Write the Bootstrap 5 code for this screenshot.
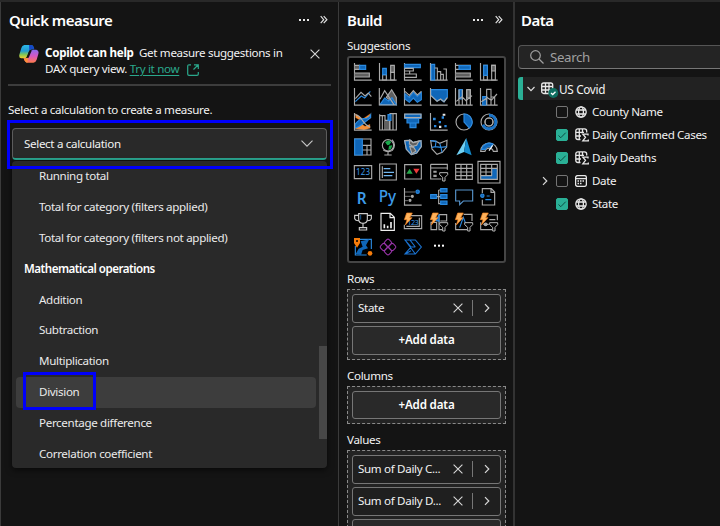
<!DOCTYPE html>
<html lang="en" data-bs-theme="dark">
<head>
<meta charset="utf-8">
<meta name="viewport" content="width=device-width, initial-scale=1">
<title>Quick measure</title>
<link href="https://cdn.jsdelivr.net/npm/bootstrap@5.3.0/dist/css/bootstrap.min.css" rel="stylesheet">
<style>
body{font-family:"Noto Sans","Open Sans",sans-serif;font-size:11.6px;line-height:16px;letter-spacing:-.33px;background:#141414;color:#f2f2f2;height:526px;overflow:hidden}
.app-shell{height:526px;border-top:2px solid #292929;overflow:hidden}
.pane{border-left:1px solid #3b3b3b;height:524px;flex:none;white-space:nowrap}
.pane-quick{width:338px}
.pane-build{width:175px}
.pane-data{width:207px;border-left-width:2px;border-color:#333}
.pane-title{font-size:15px;line-height:20px;font-weight:600;letter-spacing:-.5px;color:#fff}
.pane svg{flex:none;display:block}
b{font-weight:700;letter-spacing:-.27px;color:#fff}
.pane-head{height:36px;padding-top:8px}
.tip{margin:0 7px 0 7px;height:48px;border-bottom:2px solid #3d3d3d;padding:7px 11px 0 11px}
.tip-text{width:252px;margin-left:6px}
.teal-link{color:#2aa88c;text-decoration:underline;text-underline-offset:2px}
.prompt{margin:16px 7px 0}
.calc-select{margin:10px 11px 0 11px;height:32px;width:315px;background:#292929;border:1px solid #5c5c5c;border-bottom:2px solid #2aa690;border-radius:4px;padding:0 13px 0 11px}
.calc-menu{margin:1px 11px 0;width:315px;height:307px;background:#292929;border-radius:4px;padding:0 11px 0 4px;box-shadow:0 2px 6px #0009;position:relative}
.calc-item{height:30.9px;line-height:30.9px;padding-left:23px;border-radius:4px;color:#ebebeb}
.calc-head{padding-left:8px;font-weight:600;color:#fff;letter-spacing:-.5px}
.calc-item.current{background:#3d3d3d}
.scroll-thumb{position:absolute;right:0;top:185px;width:8px;height:93px;background:#474747}
.marker{position:absolute;border:3px solid #0000fb}
.marker-select{left:7px;top:120px;width:326px;height:49px}
.marker-item{left:23px;top:372px;width:73px;height:38px}
.visuals{background:#000;border:2px solid #454545;border-radius:3px;display:grid;grid-template-columns:repeat(6,25.2px);grid-auto-rows:25px;width:159px;height:207px;padding:1px 2px;margin-top:2px}
.visuals>svg{width:18px;height:18px;margin:4px 0 0 3px;overflow:visible;fill:none;stroke:#aaa;stroke-width:3.4}
.visuals .b{fill:#0f66b8;stroke:#2b8ae0}
.visuals .l{stroke:#2b8ae0}
.visuals .d{fill:#606060}
.visuals .f{fill:#0f66b8;stroke:none}
.visuals .o{fill:#f59038;stroke:#c05a10;stroke-width:1}
.visuals text{stroke:none;fill:#3d9be8;font-family:"Noto Sans",sans-serif;letter-spacing:0}
.well{width:159px;border:1px dashed #8a8a8a;background:#232323;padding:4px}
.pill,.add-pill{height:28.5px;border:1px solid #767676;border-radius:3px;background:#1f1f1f}
.pill{padding:0 10px 0 5px}
.pill .name{width:96px}
.add-pill{background:#292929;font-weight:600;color:#fff;text-align:center;line-height:26px;letter-spacing:-.15px}
.well>*+*{margin-top:3.500px}
.sep{width:1px;height:16px;background:#777;margin:0 11px 0 9px}
.well-label{height:16px;margin-top:8px;margin-bottom:2px}
.search-field{height:24px;margin:7px 0 0 3px;border:1px solid #555;border-right:0;border-bottom-color:#777;border-radius:4px 0 0 4px;background:#242424;color:#a0a0a0;font-size:13.3px;letter-spacing:-.35px;padding-left:11px;gap:6px}
.table-row{height:23px;margin:8px 0 0 3px;background:#222;border-left:5px solid #2bb096;border-radius:3px 0 0 3px;padding-left:4px;font-size:11.8px}
.field{height:23.2px;padding-left:27px;letter-spacing:-.35px}
.chk{width:12px;height:12px;border:1px solid #757575;border-radius:2px}
.chk.on{background:#2ab096;border-color:#2ab096}
.ico{fill:none;stroke:#e8e8e8;stroke-width:1.3}
.ico-s{margin:0 5px 0 7px}
.ico-m{margin:0 3px 0 7px}
</style>
<script src="https://cdn.jsdelivr.net/npm/bootstrap@5.3.0/dist/js/bootstrap.bundle.min.js"></script>
</head>
<body>
<svg width="0" height="0" class="position-absolute">
<symbol id="axes" viewBox="0 0 54 54" overflow="visible"><path d="M1.5 0V51.5H53" fill="none" stroke="#aaa" stroke-width="3.400"/></symbol>
<symbol id="bolt" viewBox="0 0 54 54" overflow="visible"><path d="M8 0H25L17 14H24L4 36L9 20H1Z" fill="#ffb35c" stroke="#f58220" stroke-width="2"/></symbol>
<symbol id="funnel" viewBox="0 0 54 54" overflow="visible"><path d="M29 29H53V35L45 43V54H38V43L29 35Z" fill="#000" stroke="#b5b5b5" stroke-width="3"/></symbol>
<symbol id="globe" viewBox="0 0 12 12"><circle cx="6" cy="6" r="5.2"/><ellipse cx="6" cy="6" rx="2.4" ry="5.2"/><path d="M1.2 4H10.8M1.2 8H10.8"/></symbol>
<symbol id="measure" viewBox="0 0 14 14"><path d="M5.5 11.5H3A2.2 2.2 0 0 1 .8 9.500V2.800A2.200 2.200 0 0 1 3 .800H9.500A2.200 2.200 0 0 1 11.700 3V4.500M.8 4.300H9M.8 8H6M4.300 .8V11.500M7.500 .8V5"/><path d="M13 7.500V6.200H7.800L10.500 9.300L7.800 12.900H13.300V11.600" stroke-width="1.300"/></symbol>
<symbol id="cross" viewBox="0 0 10 10"><path d="M.6 .6L9.400 9.400M9.400 .6L.6 9.400" fill="none" stroke="#d8d8d8" stroke-width="1.100"/></symbol>
<symbol id="more" viewBox="0 0 12 4"><g fill="#e8e8e8"><rect x="1" y="1" width="2" height="2"/><rect x="5" y="1" width="2" height="2"/><rect x="9" y="1" width="2" height="2"/></g></symbol>
<symbol id="collapse" viewBox="0 0 8 10"><path d="M.7 1.200L3.700 4.700L.7 8.200M3.700 1.200L6.900 4.700L3.700 8.200" fill="none" stroke="#e0e0e0" stroke-width="1.200"/></symbol>
<symbol id="next" viewBox="0 0 6 10"><path d="M1 1.200L4.800 5L1 8.800" fill="none" stroke="#d8d8d8" stroke-width="1.200"/></symbol>
</svg>
<main class="app-shell d-flex">

<section class="pane pane-quick">
  <header class="pane-head d-flex ps-2 pe-1">
    <div class="pane-title flex-grow-1 me-auto">Quick measure</div>
    <svg width="12" height="4" class="mt-2"><use href="#more"/></svg>
    <svg width="8" height="10" class="mx-2 me-2" style="margin-top:5px;margin-left:10px!important;margin-right:6px!important"><use href="#collapse"/></svg>
  </header>
  <div class="tip d-flex">
    <svg width="20" height="18" viewBox="0 0 60 54">
      <defs>
        <linearGradient id="ca" x1="0" y1="0" x2="0" y2="1"><stop offset="0" stop-color="#2bb8e8"/><stop offset=".45" stop-color="#239ad0"/><stop offset=".7" stop-color="#7cc55c"/><stop offset="1" stop-color="#f5cf2a"/></linearGradient>
        <linearGradient id="cb" x1="0" y1="0" x2="0" y2="1"><stop offset="0" stop-color="#8a6cf0"/><stop offset=".5" stop-color="#d957c0"/><stop offset="1" stop-color="#ff7a4c"/></linearGradient>
      </defs>
      <path d="M16 0H38Q43 1 45 13H37Q31 13 29 21L25 34Q23 40 16 40H7Q-1 39 1 29L7 9Q9 1 16 0Z" fill="url(#ca)"/>
      <path d="M30 0H38Q44 1 46 13H38Q33 13 31 18Z" fill="#1549c8"/>
      <path d="M45 14H52Q61 16 58 27L53 44Q50 53 43 53H24Q17 52 14 40H20Q27 40 30 31L34 20Q37 14 45 14Z" fill="url(#cb)"/>
      <path d="M14 40H20Q25 40 28 36L25 53Q17 52 14 40Z" fill="#ff8f39"/>
      <path d="M31 17L38 17L29 38H22Z" fill="#141414"/>
    </svg>
    <div class="tip-text"><b>Copilot can help</b>&nbsp; Get measure suggestions in<br><span>DAX query view.</span> <a class="teal-link" href="#">Try it now</a><svg class="d-inline-block ms-2 align-middle" width="12" height="12" viewBox="0 0 12 12" fill="none" stroke="#2aa88c" stroke-width="1.200"><path d="M4 .8H2Q.7 .8 .7 2V10Q.7 11.300 2 11.300H10Q11.300 11.300 11.300 10V8M7 .8H11.300V5M11 1L6.500 5.500"/></svg></div>
    <svg width="10" height="10" class="mt-1 ms-auto"><use href="#cross"/></svg>
  </div>
  <div class="prompt">Select a calculation to create a measure.</div>
  <div class="calc-select d-flex align-items-center justify-content-between"><span>Select a calculation</span>
    <svg width="12" height="7" viewBox="0 0 12 7" fill="none" stroke="#c8c8c8" stroke-width="1.100"><path d="M.5 .7L6 6.200L11.500 .7"/></svg></div>
  <div class="calc-menu">
    <div class="calc-item">Running total</div>
    <div class="calc-item">Total for category (filters applied)</div>
    <div class="calc-item">Total for category (filters not applied)</div>
    <div class="calc-item calc-head">Mathematical operations</div>
    <div class="calc-item">Addition</div>
    <div class="calc-item">Subtraction</div>
    <div class="calc-item">Multiplication</div>
    <div class="calc-item current">Division</div>
    <div class="calc-item">Percentage difference</div>
    <div class="calc-item">Correlation coefficient</div>
    <div class="scroll-thumb"></div>
  </div>
</section>

<section class="pane pane-build px-2">
  <header class="pane-head d-flex">
    <div class="pane-title flex-grow-1">Build</div>
    <svg width="12" height="4" class="mt-2"><use href="#more"/></svg>
    <svg width="8" height="10" style="margin:5px 2px 0 11px"><use href="#collapse"/></svg>
  </header>
  <div>Suggestions</div>
  <div class="visuals">
    <svg viewBox="0 0 54 54"><use href="#axes"/><path class="d" d="M2 7H17V19H2M2 30H46V42H2"/><path class="b" d="M17 7H35V19H17Z"/></svg>
    <svg viewBox="0 0 54 54"><use href="#axes"/><path d="M11 35H22V51H11ZM35 22H46V51H35Z"/><path class="d" d="M35 7H46V28H35Z"/><path class="b" d="M11 16H22V35H11Z"/></svg>
    <svg viewBox="0 0 54 54"><use href="#axes"/><path class="b" d="M2 4H49V14H2Z"/><path d="M2 16H28V24H2M2 24H17V33H2M2 33H37V43H2"/></svg>
    <svg viewBox="0 0 54 54"><use href="#axes"/><path class="b" d="M4 4H14V51H4Z"/><path d="M14 15H22V51M22 26H32V51M32 34H40V51M40 18H49V51"/></svg>
    <svg viewBox="0 0 54 54"><use href="#axes"/><path d="M2 7H46V19H2"/><path class="d" d="M2 30H46V42H2"/><path class="b" d="M12 8H46V19H12Z"/></svg>
    <svg viewBox="0 0 54 54"><use href="#axes"/><path d="M11 7H22V51H11ZM35 7H46V51H35Z"/><path class="d" d="M35 7H46V24H35Z"/><path class="b" d="M11 7H22V37H11Z"/></svg>

    <svg viewBox="0 0 54 54"><use href="#axes"/><path class="l" d="M4 41L22 24L32 30L49 10"/><path d="M4 32L21 13L33 24L43 15L52 26"/></svg>
    <svg viewBox="0 0 54 54"><path class="d" d="M22 28L38 5L52 28V50Z"/><path class="b" d="M3 50L17 30L29 39L39 29L52 50Z"/><path d="M3 34L17 8L45 50M1 0V51H53"/></svg>
    <svg viewBox="0 0 54 54"><use href="#axes"/><path class="b" d="M3 17L16 28L28 12L40 25L52 13V35L40 43L28 30L16 43L3 33Z"/><path d="M3 10L16 22L28 8L40 21L52 10"/></svg>
    <svg viewBox="0 0 54 54"><path class="b" d="M3 5H52V28L42 42L31 34L22 39L3 22Z"/><path d="M3 23L21 40L32 33L42 41L52 29"/><use href="#axes"/></svg>
    <svg viewBox="0 0 54 54"><use href="#axes"/><path class="b" d="M12 5H22V33H12Z"/><path class="d" d="M35 5H46V30H35Z"/><path d="M12 5V51M22 5V51M35 5V51M46 5V51M4 40L21 26L33 38L51 23"/></svg>
    <svg viewBox="0 0 54 54"><use href="#axes"/><path class="b" d="M8 26H20V51H8Z"/><path d="M20 51V4H33V51M33 27H44V51M4 41L22 29L34 37L51 18"/></svg>

    <svg viewBox="0 0 54 54"><path class="o" d="M4 2L26 18L49 2V16L29 28L5 14ZM4 34L18 29L33 40L48 34V46L30 51L4 47Z"/><path class="b" d="M3 34Q17 17 30 17T50 5V14Q35 26 26 33T3 46Z"/><path d="M4 5Q17 8 25 22T49 43"/><use href="#axes"/></svg>
    <svg viewBox="0 0 54 54"><path d="M2 4V51H52V2H33V51M2 8H18V51M10 8V51M18 22H30V51M24 22V51M42 2V51"/><path class="b" d="M27 5H36V22H27Z"/></svg>
    <svg viewBox="0 0 54 54"><path class="b" d="M2 4H51V16H2ZM9 16H44V30H9ZM18 30H36V44H18Z"/><path d="M2 3H51V14H2Z"/></svg>
    <svg viewBox="0 0 54 54"><use href="#axes"/><path fill="#2b8ae0" stroke="none" d="M9 14H17V22H9ZM26 24H33V31H26ZM35 10H42V17H35ZM12 36H19V43H12ZM43 36H50V43H43Z"/><path fill="#e8e8e8" stroke="none" d="M38 2H46V8H38ZM27 38H34V45H27Z"/></svg>
    <svg viewBox="0 0 54 54"><circle cx="27" cy="27" r="24"/><path class="b" d="M27 27V3A24 24 0 0 1 43 45Z"/></svg>
    <svg viewBox="0 0 54 54"><circle cx="27" cy="27" r="24"/><circle cx="27" cy="27" r="12"/><path d="M27 7A20 20 0 1 1 9 35" stroke="#1972c6" stroke-width="9"/><circle cx="27" cy="27" r="12"/></svg>

    <svg viewBox="0 0 54 54"><path d="M2 3H51V51H2ZM25 22H51M25 36H51M39 22V51"/><path class="b" d="M2 3H25V51H2Z"/></svg>
    <svg viewBox="0 0 54 54"><circle cx="27" cy="22" r="17"/><path fill="#19a94b" stroke="none" d="M18 12L30 7L37 12L31 20L25 22ZM30 23L40 22L36 33L28 36Z"/><path d="M39 5Q53 20 40 37Q29 45 13 37M27 42V51M16 51H38"/></svg>
    <svg viewBox="0 0 54 54"><path class="b" d="M2 8L20 7L27 14L51 8L52 26L38 45L22 50L7 34Z"/><path class="d" d="M17 6L28 14L45 9L38 22L26 25L16 18ZM17 25L29 28L36 39L24 47Z"/><path d="M2 8L20 7L27 14L51 8L52 26L38 45L22 50L7 34Z"/></svg>
    <svg viewBox="0 0 54 54"><path d="M2 8L18 10L29 16L51 7L50 27L37 43L21 49L6 33Z"/><path class="l" d="M2 8L18 10L16 26L33 28L36 43M29 16L33 28L50 26M6 28L17 26"/></svg>
    <svg viewBox="0 0 54 54"><path fill="#70d0f3" stroke="none" d="M34 0L4 52L27 42Z"/><path fill="#138acb" stroke="none" d="M34 0L50 52L27 42Z"/></svg>
    <svg viewBox="0 0 54 54"><path d="M2 40A25 25 0 0 1 52 40H40A13 13 0 0 0 15 40Z"/><path class="b" d="M5 34A24 24 0 0 1 39 18L33 28A13 13 0 0 0 16 34Z"/><path stroke="#fff" d="M27 38L38 22"/></svg>

    <svg viewBox="0 0 54 54"><path d="M1 8H53V47H1Z"/><text x="6" y="37" font-size="24" textLength="42">123</text></svg>
    <svg viewBox="0 0 54 54"><path d="M2 3H52V51H2ZM10 10V45"/><path stroke="#72b7f0" stroke-width="4" d="M14 17H34M14 28H45M14 38H40"/></svg>
    <svg viewBox="0 0 54 54"><path d="M2 5H52V48H2Z"/><path fill="#24a648" stroke="none" d="M7 32L17 17L26 32Z"/><path fill="#ee3b3b" stroke="none" d="M28 17H47L37 32Z"/></svg>
    <svg viewBox="0 0 54 54"><path d="M2 4H52V20M2 4V48H34M2 15H52"/><path fill="#a2a2a2" stroke="none" d="M10 23H20V29H10ZM10 35H20V42H10Z"/><use href="#funnel"/></svg>
    <svg viewBox="0 0 54 54"><path d="M2 4H52V49H2ZM2 16H52M2 27H52M2 38H52M18 4V49M35 4V49"/></svg>
    <svg viewBox="0 0 54 54"><path d="M-6 -5H60V60H-6Z"/><path class="f" d="M36 15H51V49H3V38H36Z"/><path d="M2 4H52V49H2ZM2 16H52M2 27H36M2 38H36M18 4V38M35 4V38"/></svg>

    <svg viewBox="0 0 54 54"><text x="8" y="48" font-size="46" font-weight="600">R</text></svg>
    <svg viewBox="0 0 54 54"><text x="-1" y="42" font-size="46" font-weight="500">Py</text></svg>
    <svg viewBox="0 0 54 54"><use href="#axes"/><path d="M2 12H34M2 25H20M2 38H12" stroke-width="2"/><circle class="b" cx="41" cy="11" r="5"/><circle cx="25" cy="25" r="3" fill="#aaa"/><circle cx="18" cy="37" r="3" fill="#aaa"/></svg>
    <svg viewBox="0 0 54 54"><path d="M20 26H34M26 6V47H34M26 6H34"/><path class="b" d="M2 20H20V31H2ZM32 2H51V12H32ZM32 20H51V31H32ZM32 39H51V49H32Z"/></svg>
    <svg viewBox="0 0 54 54"><path stroke="#5794cc" d="M2 6H53V39H25L14 50V39H2Z"/></svg>
    <svg viewBox="0 0 54 54"><path d="M7 15V2H34L44 12V51H7V35M33 2V13H44"/><circle class="b" cx="7" cy="23" r="5"/><path class="l" d="M20 24H29M16 35H34"/></svg>

    <svg viewBox="0 0 54 54"><path stroke="#ccc" d="M14 2H40V18Q40 31 27 31T14 18ZM14 7H2V17Q5 24 15 23M40 7H52V17Q49 24 39 23M27 31V43M16 51V44H38V51Z"/><path class="l" d="M20 6V20" stroke-width="2"/></svg>
    <svg viewBox="0 0 54 54"><path stroke="#eee" d="M6 1H34L46 13V52H6ZM33 2V14H45"/><path stroke="#eee" stroke-width="5" d="M16 34V46M26 38V46M36 27V46"/></svg>
    <svg viewBox="0 0 54 54"><path d="M12 8H53V47H1V35M46 14V40H7"/><text x="10" y="36" font-size="22" textLength="34">123</text><use href="#bolt"/></svg>
    <svg viewBox="0 0 54 54"><path d="M26 5H50V24H31M3 28H20V50H3ZM27 4V50H38"/><path class="b" d="M17 22L27 7V25Z"/><use href="#funnel"/><use href="#bolt"/></svg>
    <svg viewBox="0 0 54 54"><path d="M26 4H51V24M2 30V50H36"/><path class="l" d="M14 44L25 13L33 34"/><use href="#funnel"/><use href="#bolt"/></svg>
    <svg viewBox="0 0 54 54"><path d="M26 6H52V22M2 28V50H36M28 20H46M10 34H26"/><circle cx="17" cy="34" r="4" fill="#a2a2a2"/><use href="#funnel"/><use href="#bolt"/></svg>

    <svg viewBox="0 0 54 54"><path class="l" d="M18 4H52V33M4 24V51H38"/><path class="f" d="M20 10L46 4L36 22L42 31L26 36L21 51L5 48L14 32L26 26Z"/><path fill="#f57c0b" stroke="none" d="M0 0H18V15L9 29L0 15Z"/><circle cx="9" cy="9" r="3" fill="#000" stroke="none"/><circle cx="48" cy="46" r="7" fill="#f57c0b" stroke="none"/></svg>
    <svg viewBox="0 0 54 54"><g stroke="#9a35aa" stroke-width="3" transform="rotate(45 27 27)"><rect x="9" y="9" width="18" height="18" rx="5"/><rect x="27" y="9" width="18" height="18" rx="5"/><rect x="9" y="27" width="18" height="18" rx="5"/><rect x="27" y="27" width="18" height="18" rx="5"/></g></svg>
    <svg viewBox="0 0 54 54"><path stroke="#1b73d1" d="M3 6H34L52 27L34 48H3L21 27ZM3 6L34 48M18 6L34 27M21 27L34 27M3 48L21 38"/></svg>
    <svg viewBox="0 0 54 54"><g fill="#fff" stroke="none"><rect x="12" y="20" width="6" height="6"/><rect x="24" y="20" width="6" height="6"/><rect x="36" y="20" width="6" height="6"/></g></svg>
  </div>
  <div class="well-label">Rows</div>
  <div class="well">
    <div class="pill d-flex align-items-center"><span class="name">State</span><svg width="10" height="10"><use href="#cross"/></svg><i class="sep"></i><svg width="6" height="10"><use href="#next"/></svg></div>
    <div class="add-pill">+Add data</div>
  </div>
  <div class="well-label">Columns</div>
  <div class="well"><div class="add-pill">+Add data</div></div>
  <div class="well-label">Values</div>
  <div class="well">
    <div class="pill d-flex align-items-center"><span class="name">Sum of Daily C...</span><svg width="10" height="10"><use href="#cross"/></svg><i class="sep"></i><svg width="6" height="10"><use href="#next"/></svg></div>
    <div class="pill d-flex align-items-center"><span class="name">Sum of Daily D...</span><svg width="10" height="10"><use href="#cross"/></svg><i class="sep"></i><svg width="6" height="10"><use href="#next"/></svg></div>
    <div class="add-pill"></div>
  </div>
</section>

<section class="pane pane-data">
  <header class="pane-head" style="padding-left:6px"><div class="pane-title">Data</div></header>
  <div class="search-field d-flex align-items-center"><svg width="14" height="14" viewBox="0 0 14 14" fill="none" stroke="#a0a0a0" stroke-width="1.200"><circle cx="5.500" cy="5.500" r="4.800"/><path d="M9 9L13.500 13.500"/></svg><span>Search</span></div>
  <div class="table-row d-flex align-items-center"><svg width="8" height="6" viewBox="0 0 8 6" fill="none" stroke="#ddd" stroke-width="1.200"><path d="M.5 1L4 4.700L7.500 1"/></svg>
    <svg width="18" height="18" viewBox="0 0 18 18" class="ico" style="margin-left:6px"><rect x=".7" y="3" width="11" height="10.500" rx="2"/><path d="M.7 6.500H11.700M.7 10H11.700M4.500 3V13.500M8 3V13.500"/><circle cx="12.300" cy="13" r="5" fill="#0e6e60" stroke="none"/><path d="M10 13L11.700 14.500L14.500 11.700" stroke="#fff"/></svg>
    <span>US Covid</span></div>
  <div>
    <div class="field d-flex align-items-center"><svg width="14" height="10"></svg><span class="chk"></span><svg width="12" height="12" class="ico ico-s"><use href="#globe"/></svg><span>County Name</span></div>
    <div class="field d-flex align-items-center"><svg width="14" height="10"></svg><span class="chk on d-flex"><svg width="10" height="10" viewBox="0 0 10 10" fill="none" stroke="#0c4c42"><path d="M1.500 5.500L3.800 7.700L8.700 2.700"/></svg></span><svg width="14" height="14" class="ico ico-m"><use href="#measure"/></svg><span>Daily Confirmed Cases</span></div>
    <div class="field d-flex align-items-center"><svg width="14" height="10"></svg><span class="chk on d-flex"><svg width="10" height="10" viewBox="0 0 10 10" fill="none" stroke="#0c4c42"><path d="M1.500 5.500L3.800 7.700L8.700 2.700"/></svg></span><svg width="14" height="14" class="ico ico-m"><use href="#measure"/></svg><span>Daily Deaths</span></div>
    <div class="field d-flex align-items-center"><svg width="6" height="10" class="me-2"><use href="#next"/></svg><span class="chk"></span><svg width="12" height="12" viewBox="0 0 12 12" class="ico ico-s"><rect x=".6" y=".6" width="10.800" height="10.800" rx="2"/><path d="M.6 3.600H11.400"/><path d="M2.500 6H10M2.500 8.500H7.500" stroke-dasharray="1.500 1"/></svg><span>Date</span></div>
    <div class="field d-flex align-items-center"><svg width="14" height="10"></svg><span class="chk on d-flex"><svg width="10" height="10" viewBox="0 0 10 10" fill="none" stroke="#0c4c42"><path d="M1.500 5.500L3.800 7.700L8.700 2.700"/></svg></span><svg width="12" height="12" class="ico ico-s"><use href="#globe"/></svg><span>State</span></div>
  </div>
</section>
</main>
<div class="marker marker-select"></div>
<div class="marker marker-item"></div>
</body>
</html>
